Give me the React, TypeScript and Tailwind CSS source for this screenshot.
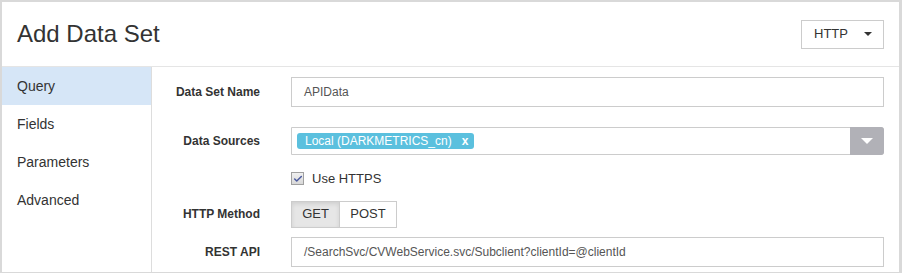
import { Check } from 'lucide-react';

const navItems = ['Query', 'Fields', 'Parameters', 'Advanced'];

const Label = ({ children }: { children: React.ReactNode }) => (
  <div className="w-[108px] shrink-0 text-right text-[12px] font-bold text-[#333]">{children}</div>
);

export default function App() {
  return (
    <div
      className="h-[273px] w-[902px] bg-[#d9d9d9] pb-[1px] pl-[2px] pr-[3px] pt-[2px] text-[#333]"
      style={{ fontFamily: '"Liberation Sans", Arial, sans-serif' }}
    >
      <div className="flex h-full flex-col bg-white">
        {/* header */}
        <div className="flex h-[65px] shrink-0 items-center justify-between border-b border-[#e5e5e5] pl-[15px] pr-[15px]">
          <h1 className="text-[24px] font-normal leading-none text-[#333]">Add Data Set</h1>
          <button className="flex h-[29px] w-[83px] items-center justify-between border border-[#ccc] bg-white pl-[12px] pr-[11px] text-[13px] text-[#333]">
            <span>HTTP</span>
            <span className="h-0 w-0 border-l-[4px] border-r-[4px] border-t-[4px] border-l-transparent border-r-transparent border-t-[#333]" />
          </button>
        </div>

        <div className="flex flex-1">
          {/* sidebar */}
          <div className="w-[150px] shrink-0 border-r border-[#ddd]">
            {navItems.map((item, i) => (
              <div
                key={item}
                className={`flex h-[38px] items-center pl-[15px] text-[14px] text-[#333] ${i === 0 ? 'bg-[#d6e6f7]' : ''}`}
              >
                {item}
              </div>
            ))}
          </div>

          {/* form */}
          <div className="flex flex-1 flex-col pr-[15px] pt-[10px]">
            <div className="flex items-center gap-[31px]">
              <Label>Data Set Name</Label>
              <div className="flex h-[30px] flex-1 items-center border border-[#ccc] pl-[12px] text-[12px] text-[#555]">
                APIData
              </div>
            </div>

            <div className="mt-[20px] flex items-center gap-[31px]">
              <Label>Data Sources</Label>
              <div className="flex h-[28px] flex-1 items-center rounded-r-[3px] border border-[#ccc] pl-[5px]">
                <span className="flex h-[16px] items-center gap-[10px] rounded-[3px] bg-[#5bc0de] pl-[8px] pr-[6px] text-[12px] text-white">
                  <span>Local (DARKMETRICS_cn)</span>
                  <span className="font-bold">x</span>
                </span>
                <span className="ml-auto flex h-[28px] w-[34px] -mr-px -my-px items-center justify-center rounded-r-[3px] bg-[#b1b1b7]">
                  <span className="h-0 w-0 border-l-[6px] border-r-[6px] border-t-[6px] border-l-transparent border-r-transparent border-t-white" />
                </span>
              </div>
            </div>

            <div className="mt-[14px] flex items-center gap-[8px] pl-[139px]">
              <span className="flex h-[13px] w-[13px] items-center justify-center border border-[#a0a0a0] bg-gradient-to-b from-[#f0f0f0] to-[#d8d8d8]">
                <Check size={10} strokeWidth={3.5} className="text-[#4b5a9e]" />
              </span>
              <span className="text-[13px] text-[#333]">Use HTTPS</span>
            </div>

            <div className="mt-[12px] flex items-center gap-[31px]">
              <Label>HTTP Method</Label>
              <div className="flex h-[27px]">
                <button className="w-[49px] border border-[#ccc] bg-[#e6e6e6] text-[13px] text-[#333] shadow-[inset_0_2px_4px_rgba(0,0,0,0.1)]">
                  GET
                </button>
                <button className="-ml-px w-[58px] border border-[#ccc] bg-white text-[13px] text-[#333]">
                  POST
                </button>
              </div>
            </div>

            <div className="mt-[9px] flex items-center gap-[31px]">
              <Label>REST API</Label>
              <div className="flex h-[30px] flex-1 items-center border border-[#ccc] pl-[12px] text-[12px] text-[#555]">
                /SearchSvc/CVWebService.svc/Subclient?clientId=@clientId
              </div>
            </div>
          </div>
        </div>
      </div>
    </div>
  );
}
